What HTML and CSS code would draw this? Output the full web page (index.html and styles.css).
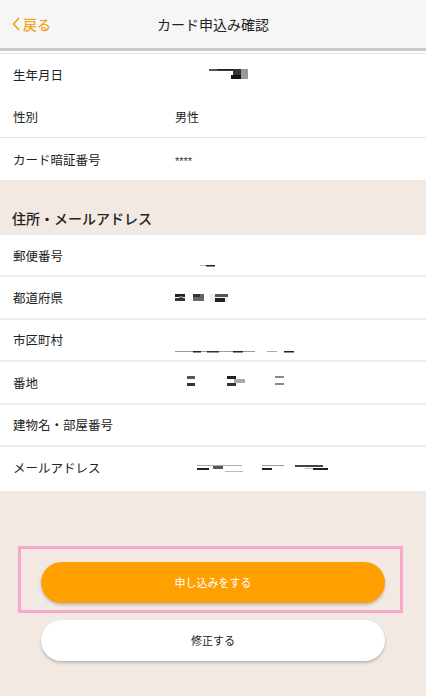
FILE: index.html
```html
<!DOCTYPE html>
<html lang="ja">
<head>
<meta charset="utf-8">
<title>カード申込み確認</title>
<link rel="stylesheet" href="styles.css">
</head>
<body>
<header class="topbar">
  <a class="back">
    <svg class="chev" width="8" height="14" viewBox="0 0 8 14"><path d="M6.5 1.5 L1.5 7 L6.5 12.5" fill="none" stroke="#f4a31c" stroke-width="1.8" stroke-linecap="round" stroke-linejoin="round"/></svg>
    <span>戻る</span>
  </a>
  <h1 class="title">カード申込み確認</h1>
  <span class="spacer"></span>
</header>

<section class="list first">
  <div class="row nosep">
    <span class="label">生年月日</span>
    <span class="value"><svg class="shift34" width="40" height="14" viewBox="0 0 40 14"><rect x="0" y="2" width="26" height="2" fill="#555"/><rect x="8" y="2" width="18" height="1.5" fill="#222"/><rect x="24" y="2" width="8" height="6" fill="#333"/><rect x="22" y="8" width="10" height="4" fill="#111"/><rect x="32" y="2" width="7" height="10" fill="#999"/></svg></span>
  </div>
  <div class="row mid">
    <span class="label">性別</span>
    <span class="value">男性</span>
  </div>
  <div class="row last">
    <span class="label">カード暗証番号</span>
    <span class="value stars">****</span>
  </div>
</section>

<div class="section-head">住所・メールアドレス</div>

<section class="list">
  <div class="row">
    <span class="label">郵便番号</span>
    <span class="value low"><svg class="shift25" width="20" height="14" viewBox="0 0 20 14"><rect x="0" y="11" width="6" height="1" fill="#bbb"/><rect x="6" y="11" width="9" height="1.5" fill="#222"/></svg></span>
  </div>
  <div class="row">
    <span class="label">都道府県</span>
    <span class="value"><svg width="60" height="14" viewBox="0 0 60 14"><rect x="0" y="3" width="10" height="3" fill="#222"/><rect x="0" y="7" width="10" height="3" fill="#333"/><rect x="4" y="5" width="4" height="2" fill="#777"/><rect x="18" y="3" width="11" height="7" fill="#666"/><rect x="18" y="3" width="7" height="3" fill="#333"/><rect x="35" y="3" width="18" height="8" fill="#eee"/><rect x="40" y="3" width="13" height="3" fill="#555"/><rect x="40" y="7" width="10" height="4" fill="#222"/></svg></span>
  </div>
  <div class="row">
    <span class="label">市区町村</span>
    <span class="value low"><svg width="125" height="14" viewBox="0 0 125 14"><rect x="0" y="12" width="80" height="1" fill="#999"/><rect x="18" y="12" width="8" height="1.5" fill="#222"/><rect x="32" y="12" width="12" height="1.5" fill="#333"/><rect x="58" y="12" width="10" height="1.5" fill="#222"/><rect x="92" y="12" width="10" height="1" fill="#aaa"/><rect x="109" y="12" width="10" height="1.5" fill="#222"/></svg></span>
  </div>
  <div class="row">
    <span class="label">番地</span>
    <span class="value"><svg width="120" height="14" viewBox="0 0 120 14"><rect x="12" y="1" width="8" height="3" fill="#555"/><rect x="12" y="8" width="8" height="3" fill="#333"/><rect x="52" y="1" width="9" height="3" fill="#222"/><rect x="52" y="8" width="9" height="3" fill="#333"/><rect x="59" y="4" width="11" height="4" fill="#aaa"/><rect x="100" y="1" width="9" height="2" fill="#888"/><rect x="100" y="8" width="9" height="2" fill="#888"/></svg></span>
  </div>
  <div class="row">
    <span class="label">建物名・部屋番号</span>
    <span class="value"></span>
  </div>
  <div class="row last tall">
    <span class="label">メールアドレス</span>
    <span class="value"><svg width="160" height="14" viewBox="0 0 160 14"><rect x="22" y="4" width="45" height="1" fill="#aaa"/><rect x="22" y="7" width="12" height="2" fill="#222"/><rect x="38" y="5" width="10" height="3" fill="#555"/><rect x="50" y="10" width="18" height="1" fill="#bbb"/><rect x="87" y="4" width="22" height="1" fill="#999"/><rect x="87" y="7" width="10" height="2" fill="#222"/><rect x="120" y="4" width="28" height="2" fill="#444"/><rect x="130" y="7" width="8" height="1" fill="#bbb"/><rect x="138" y="7" width="15" height="2" fill="#222"/></svg></span>
  </div>
</section>

<div class="actions">
  <div class="highlight">
    <button class="btn primary">申し込みをする</button>
  </div>
  <button class="btn secondary">修正する</button>
</div>
</body>
</html>
```
FILE: styles.css
```css
* { box-sizing: border-box; }
html, body {
  margin: 0;
  padding: 0;
}
body {
  width: 426px;
  min-height: 696px;
  background: #f2e9e3;
  font-family: "Noto Sans CJK JP", "Noto Sans", sans-serif;
  color: #222;
}
.topbar {
  height: 51px;
  background: #f7f6f6;
  border-bottom: 3px solid #cbcbcb;
  display: flex;
  align-items: center;
  padding: 0 12px;
}
.back {
  display: flex;
  align-items: center;
  gap: 3px;
  width: 60px;
  color: #f4a31c;
  font-size: 14px;
  font-weight: 500;
}
.title {
  flex: 1;
  margin: 0;
  text-align: center;
  font-size: 14px;
  font-weight: 400;
  color: #222;
}
.spacer { width: 60px; }
.list {
  background: #fff;
}
.list.first {
  padding-top: 2px;
}
.list.first::before {
  content: "";
  display: block;
  height: 1px;
  background: #e6e6e6;
}
.row {
  height: 42.4px;
  display: flex;
  align-items: center;
  padding: 0 13px;
  border-bottom: 2px solid #efedeb;
  font-size: 12.5px;
}
.row.nosep { border-bottom: 2px solid #fff; height: 42px; }
.row.last { border-bottom: none; height: 42px; }
.row.last.tall { height: 44px; padding-bottom: 2px; }
.list.first .row.mid { border-bottom: 1px solid #e2e2e2; height: 42px; }
.label {
  width: 162px;
  flex: none;
}
.value {
  font-size: 12px;
  display: flex;
  align-items: center;
}
.value.low svg { margin-top: 12px; }
.shift34 { margin-left: 34px; }
.shift25 { margin-left: 25px; }
.stars {
  font-family: "Liberation Sans", Arial, sans-serif;
  font-size: 11px;
  color: #333;
  padding-top: 3px;
}
.section-head {
  height: 55px;
  padding: 0 12px 7px;
  display: flex;
  align-items: flex-end;
  font-size: 14px;
  font-weight: 500;
  color: #222;
}
.actions {
  padding-top: 55px;
  display: flex;
  flex-direction: column;
  align-items: flex-start;
}
.highlight {
  margin-left: 18px;
  width: 385px;
  height: 67px;
  border: 3px solid #f6a9c9;
  padding: 13px 0 0 20px;
}
.btn {
  width: 344px;
  height: 41px;
  border: none;
  border-radius: 21px;
  font-family: "Noto Sans CJK JP", "Noto Sans", sans-serif;
  font-size: 11px;
  box-shadow: 0 2px 3px rgba(0,0,0,0.22);
  display: block;
}
.primary {
  background: #ffa000;
  color: #fff;
}
.secondary {
  margin: 7px 0 0 41px;
  background: #fff;
  color: #222;
}
```
